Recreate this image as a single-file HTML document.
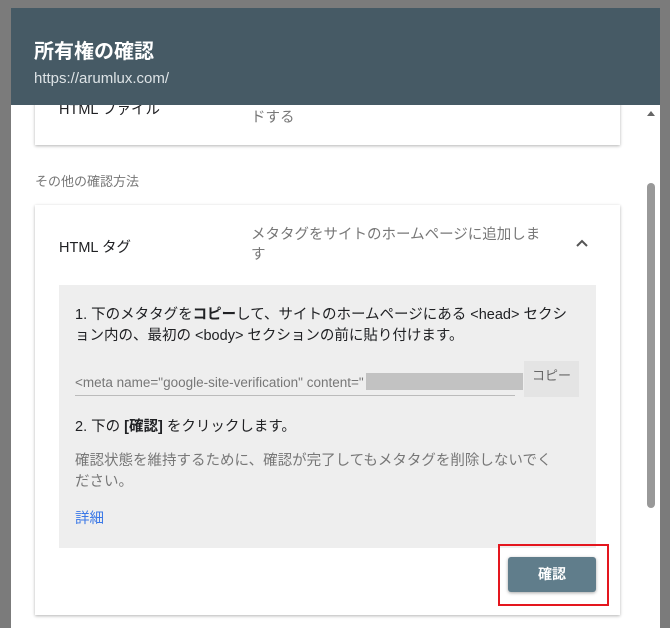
<!DOCTYPE html>
<html><head><meta charset="utf-8"><style>
*{margin:0;padding:0;box-sizing:border-box}
body{width:670px;height:619px;overflow:hidden;background:#7b7b7b;font-family:"Liberation Sans","Noto Sans CJK JP",sans-serif;position:relative}
.dlg{position:absolute;left:11px;top:8px;width:649px;height:620px;background:#fff}
.hdr{position:absolute;left:11px;top:8px;width:649px;height:97px;background:#465a65;color:#fff;z-index:3}
.hdr h1{position:absolute;left:23px;top:27px;font-size:20px;font-weight:bold}
.hdr p{position:absolute;left:23px;top:62px;font-size:15px;color:#dde3e6}
.card{position:absolute;left:35px;width:585px;background:#fff;box-shadow:0 1px 3px rgba(0,0,0,.3)}
.t{font-size:14.5px;color:#202124}
.g{color:#777}
.box{position:absolute;left:59px;top:285px;width:537px;height:263px;background:#eeeeee;font-size:14.5px;color:#202124}
.btn{position:absolute;left:508px;top:557px;width:88px;height:35px;background:#607d8b;color:#fff;font-weight:bold;font-size:14px;text-align:center;line-height:35px;border-radius:3px;box-shadow:0 1px 3px rgba(0,0,0,.35)}
.red{position:absolute;left:498px;top:544px;width:111px;height:62px;border:2px solid #e4161e}
</style></head><body>
<div class="dlg"></div>
<div class="hdr"><h1>所有権の確認</h1><p>https://arumlux.com/</p></div>
<div class="card" style="top:90px;height:55px">
 <div class="t" style="position:absolute;left:24px;top:8px">HTML ファイル</div>
 <div class="g" style="position:absolute;left:216px;top:16px;font-size:14.5px">ドする</div>
</div>
<div style="position:absolute;left:35px;top:171px;font-size:13px;color:#777">その他の確認方法</div>
<div class="card" style="top:205px;height:410px">
 <div class="t" style="position:absolute;left:24px;top:31px">HTML タグ</div>
 <div class="g" style="position:absolute;left:216px;top:20px;font-size:14.5px;line-height:20px;width:320px">メタタグをサイトのホームページに追加しま<br>す</div>
 <svg style="position:absolute;left:540px;top:33px" width="14" height="10"><path d="M2 8 L7 3 L12 8" fill="none" stroke="#555" stroke-width="2"/></svg>
</div>
<div class="box">
 <div style="position:absolute;left:16px;top:20px;line-height:21px;width:520px;white-space:nowrap">1. 下のメタタグを<b>コピー</b>して、サイトのホームページにある &lt;head&gt; セクシ<br>ョン内の、最初の &lt;body&gt; セクションの前に貼り付けます。</div>
 <div style="position:absolute;left:16px;top:90px;color:#777;font-size:13.5px">&lt;meta name="google-site-verification" content="</div>
 <div style="position:absolute;left:307px;top:88px;width:157px;height:17px;background:#c2c2c2"></div>
 <div style="position:absolute;left:16px;top:110px;width:440px;height:1px;background:#bbb"></div>
 <div style="position:absolute;left:465px;top:76px;width:55px;height:36px;background:#e4e4e4;color:#666;font-size:13px;text-align:center;line-height:30px">コピー</div>
 <div style="position:absolute;left:16px;top:130px">2. 下の <b>[確認]</b> をクリックします。</div>
 <div style="position:absolute;left:16px;top:166px;line-height:21px;color:#777;white-space:nowrap">確認状態を維持するために、確認が完了してもメタタグを削除しないでく<br>ださい。</div>
 <div style="position:absolute;left:16px;top:222px;color:#3b78e7">詳細</div>
</div>
<div class="btn">確認</div>
<div class="red"></div>
<div style="position:absolute;left:646px;top:105px;width:13px;height:514px;background:#fff"></div>
<svg style="position:absolute;left:645px;top:108px" width="12" height="10"><path d="M2 8 L6 3 L10 8Z" fill="#666"/></svg>
<div style="position:absolute;left:647px;top:183px;width:8px;height:325px;background:#999;border-radius:4px"></div>
</body></html>
